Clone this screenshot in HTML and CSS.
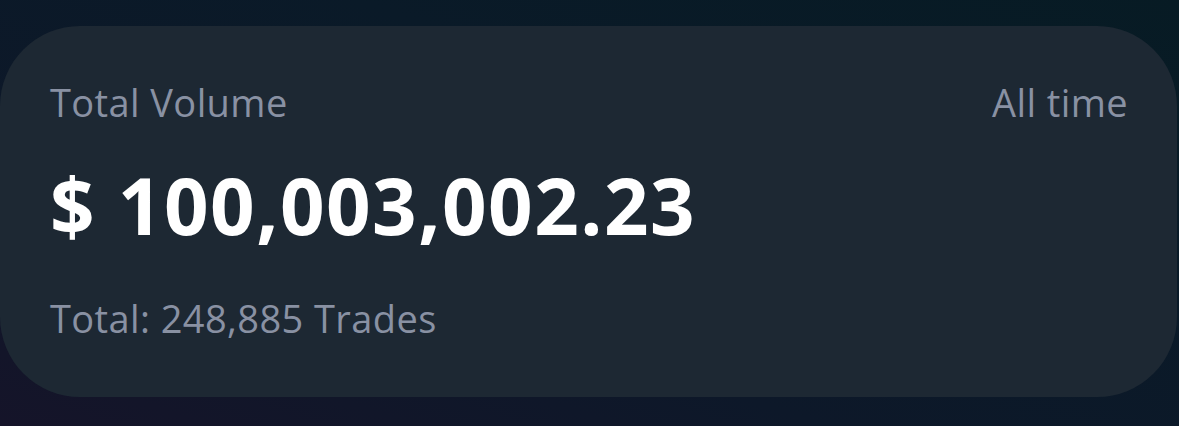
FILE: index.html
```html
<!DOCTYPE html>
<html>
<head>
<meta charset="utf-8">
<link rel="stylesheet" href="styles.css">
</head>
<body>
<div class="page">
  <section class="card">
    <div class="card-head">
      <span class="label">Total Volume</span>
      <span class="label">All time</span>
    </div>
    <div class="amount">$ 100,003,002.23</div>
    <div class="label sub">Total: 248,885 Trades</div>
  </section>
</div>
</body>
</html>
```
FILE: styles.css
```css
html, body {
  margin: 0;
  padding: 0;
}
body {
  width: 1179px;
  height: 426px;
  overflow: hidden;
  background: linear-gradient(20deg, #151429 0%, #0d1829 35%, #0a1a28 65%, #071b24 100%);
  font-family: "Open Sans", sans-serif;
}
.page {
  padding: 26px 2px 0 0;
}
.card {
  height: 371px;
  box-sizing: border-box;
  background: #1d2833;
  border-radius: 80px;
  padding: 50px 49px 0 50px;
  display: flex;
  flex-direction: column;
}
.card-head {
  display: flex;
  justify-content: space-between;
  align-items: baseline;
}
.label {
  color: #8991a3;
  font-size: 38px;
  line-height: 52px;
  letter-spacing: 0.4px;
}
.amount {
  color: #ffffff;
  font-weight: 700;
  font-size: 78px;
  line-height: 92px;
  letter-spacing: 1.5px;
  margin-top: 31px;
}
.sub {
  margin-top: 41px;
}
```
